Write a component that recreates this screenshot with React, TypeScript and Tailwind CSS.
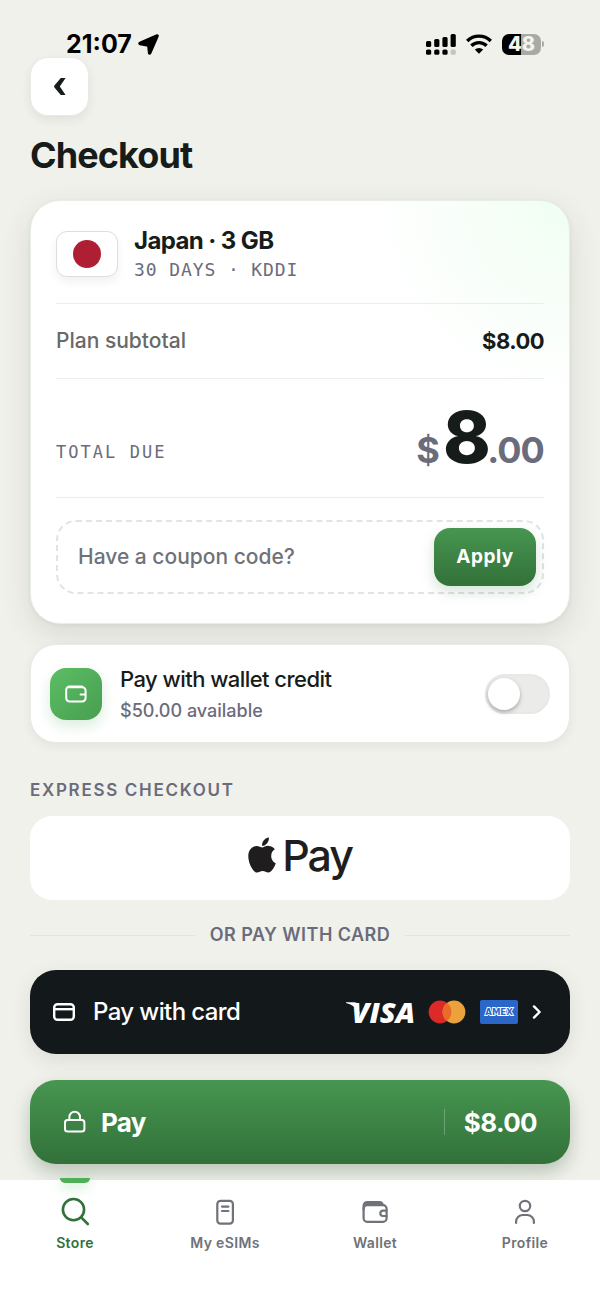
import { useState, type ReactNode } from "react";
import { FaApple } from "react-icons/fa";

const SANS = "font-['Inter',sans-serif]";
const MONO = "font-['DejaVu_Sans_Mono',monospace]";

const TABS: { label: string; href: string; icon: ReactNode; active?: boolean }[] = [
  { label: "Store", href: "#store", icon: <SearchIcon />, active: true },
  { label: "My eSIMs", href: "#esims", icon: <SimIcon /> },
  { label: "Wallet", href: "#wallet", icon: <WalletTabIcon /> },
  { label: "Profile", href: "#profile", icon: <ProfileIcon /> },
];

function SearchIcon() {
  return (
    <svg width="30" height="30" viewBox="0 0 30 30" fill="none" stroke="currentColor" strokeWidth="2.6" strokeLinecap="round">
      <circle cx="13.5" cy="12.6" r="10.6" />
      <path d="M21.200 20.400l6.600 6.600" />
    </svg>
  );
}

function SimIcon() {
  return (
    <svg width="30" height="30" viewBox="0 0 30 30" fill="none" stroke="currentColor" strokeWidth="2.200" strokeLinecap="round">
      <rect x="7.300" y="3.800" width="15.600" height="22.800" rx="3.200" />
      <path d="M12 9.600h6.400M12 14h6.400" />
    </svg>
  );
}

function WalletTabIcon() {
  return (
    <svg width="30" height="30" viewBox="0 0 30 30" fill="none" stroke="currentColor" strokeWidth="2.200" strokeLinecap="round" strokeLinejoin="round">
      <rect x="3.600" y="8.200" width="23" height="16.600" rx="3.600" />
      <path d="M3.600 12.400V8.600a3.600 3.600 0 0 1 3.600-3.600H19.600a3 3 0 0 1 3 3M5 6.700h16.600" />
      <path d="M26.400 13.600h-3.400a2.700 2.700 0 0 0 0 5.400h3.400" />
    </svg>
  );
}

function ProfileIcon() {
  return (
    <svg width="30" height="30" viewBox="0 0 30 30" fill="none" stroke="currentColor" strokeWidth="2.200" strokeLinecap="round">
      <circle cx="15" cy="9" r="5.200" />
      <path d="M6.100 26v-1.400a6.600 6.600 0 0 1 6.600-6.600h4.600a6.600 6.600 0 0 1 6.600 6.600v1.400" />
    </svg>
  );
}

function StatusBar() {
  return (
    <div className="flex h-[57px] items-end justify-between pr-[26px] pl-9 text-black">
      <div className="flex items-center gap-1.5">
        <span className="text-[25px] leading-[26px] font-bold">21:07</span>
        <svg width="21" height="21" viewBox="0 0 21 21" fill="currentColor" stroke="currentColor" strokeWidth="2" strokeLinejoin="round">
          <path d="M19 1.200 1.800 8.600c-.8.300-.7 1.400.1 1.600l8.200 1.500.8 7.400c.1.800 1 .9 1.400.2L19.800 2c.2-.5-.3-1-.8-.8z" />
        </svg>
      </div>
      <div className="flex h-[26px] items-center">
        <svg width="30" height="21" viewBox="0 0 30 21">
          <rect x="0" y="7" width="5.200" height="6" rx="1.600" />
          <rect x="8.200" y="5" width="5.200" height="8" rx="1.600" />
          <rect x="16.400" y="3" width="5.200" height="10" rx="1.600" />
          <rect x="24.600" y="0" width="5.200" height="13" rx="1.600" />
          <rect x="0" y="15.500" width="5.200" height="5.300" rx="1.600" />
          <rect x="8.200" y="15.500" width="5.200" height="5.300" rx="1.600" />
          <rect x="16.400" y="15.500" width="5.200" height="5.300" rx="1.600" />
          <rect x="24.600" y="15.500" width="5.200" height="5.300" rx="1.600" fill="#c4c5c0" />
        </svg>
        <svg className="ml-2.5" width="26" height="20" viewBox="0 0 26 20" fill="none" stroke="currentColor" strokeWidth="3.400">
          <path d="M1.200 7a16.800 16.800 0 0 1 23.600 0" />
          <path d="M5.400 11.800a10.800 10.800 0 0 1 15.200 0" />
          <path d="M8.800 15.600a6 6 0 0 1 8.400 0L13 19.800z" fill="currentColor" stroke="none" />
        </svg>
        <div className="ml-2.5 flex h-[21px] w-[39px] items-center justify-center rounded-[7px] bg-linear-to-r from-black from-48% to-[#a9aaa6] to-48% text-[20px] leading-none font-extrabold text-[#f3f4ef]">
          48
        </div>
        <div className="ml-px h-1.5 w-0.5 rounded-r-full bg-[#a9aaa6]" />
      </div>
    </div>
  );
}

function VisaMark() {
  return (
    <svg width="68" height="42" viewBox="0 -10 68 42" fill="#fff" role="img" aria-label="Visa">
      <path d="M0 1.200h8.400c1.600 0 2.600.8 3 2.300l2.600 10C11 7.500 6.600 3.300 0 1.900z" />
      <text x="5.500" y="22" fontFamily="Open Sans" fontSize="29" fontWeight="800" fontStyle="italic">
        VISA
      </text>
    </svg>
  );
}

function MastercardMark() {
  return (
    <svg width="38" height="24" viewBox="0 0 38 24" role="img" aria-label="Mastercard">
      <circle cx="12" cy="12" r="11.400" fill="#dc2a28" />
      <circle cx="26" cy="12" r="11.400" fill="#eca23c" />
      <path d="M19 3a11.400 11.400 0 0 1 0 18 11.400 11.400 0 0 1 0-18z" fill="#ea6a2b" />
    </svg>
  );
}

function AmexMark() {
  return (
    <svg width="38" height="24" viewBox="0 0 38 24" role="img" aria-label="American Express">
      <rect width="38" height="24" rx="2" fill="#2b67c9" />
      <text
        x="19"
        y="15.200"
        textAnchor="middle"
        fontFamily="DejaVu Sans"
        fontSize="8.500"
        fontWeight="700"
        fill="#2b67c9"
        stroke="#fff"
        strokeWidth="1.800"
        paintOrder="stroke"
      >
        AMEX
      </text>
    </svg>
  );
}

function OrderCard() {
  const [coupon, setCoupon] = useState("");

  return (
    <section className="rounded-[30px] border border-[#e6eee6] bg-white bg-[radial-gradient(circle_at_100%_0%,#f0fef2_0,#ffffff_200px)] px-[25px] pt-[27px] pb-[29px] shadow-[0_10px_30px_rgba(40,50,35,0.12),0_1px_4px_rgba(40,50,35,0.06)]">
      <div className="flex items-center border-b border-[#ecedea] pb-6">
        <div className="flex h-[46px] w-[62px] items-center justify-center rounded-[11px] border border-[#dedede] bg-white shadow-[0_5px_10px_rgba(0,0,0,0.06)]">
          <div className="size-7 rounded-full bg-[#ae1f33]" />
        </div>
        <div className="ml-4">
          <h2 className="text-[24px] leading-[26px] font-bold tracking-tight">Japan · 3 GB</h2>
          <p className={`${MONO} mt-[7px] text-[18px] leading-[18px] tracking-wider text-[#6b6c7b]`}>30 DAYS · KDDI</p>
        </div>
      </div>

      <div className="flex h-[75px] items-center justify-between border-b border-[#ecedea]">
        <span className="text-[21px] font-medium text-[#666a68]">Plan subtotal</span>
        <span className="text-[22px] font-bold tracking-tight">$8.00</span>
      </div>

      <div className="flex h-[119px] items-end justify-between border-b border-[#ecedea] pb-6">
        <span className={`${MONO} mb-2.5 text-[17px] leading-[22px] tracking-[0.12em] text-[#6b6c7b]`}>TOTAL DUE</span>
        <span className="text-[36px] leading-none font-bold tracking-tight text-[#6b6c7b]">
          $<span className="ml-1 text-[72px] leading-[72px] font-extrabold tracking-tighter text-[#161c19]">8</span>.00
        </span>
      </div>

      <div className="mt-[22px] flex items-center gap-3 rounded-[20px] border-2 border-dashed border-[#e3e3e1] p-1.5 pl-5">
        <input
          type="text"
          aria-label="Coupon code"
          value={coupon}
          onChange={(e) => setCoupon(e.target.value)}
          placeholder="Have a coupon code?"
          className="min-w-0 flex-1 bg-transparent text-[21px] font-medium text-[#161c19] outline-none placeholder:text-[#6f7278]"
        />
        <button
          type="button"
          className="h-[58px] w-[102px] rounded-2xl bg-linear-to-b from-[#479650] to-[#32713a] text-[19px] font-bold tracking-wide text-white shadow-[0_6px_14px_rgba(50,113,58,0.2)]"
        >
          Apply
        </button>
      </div>
    </section>
  );
}

function WalletCredit() {
  const [on, setOn] = useState(false);

  return (
    <label className="mt-5 flex h-[99px] items-center rounded-[26px] border border-[#e9eae6] bg-white px-[19px] shadow-[0_3px_10px_rgba(40,50,35,0.07)]">
      <span className="flex size-[52px] items-center justify-center rounded-2xl bg-linear-to-br from-[#5cbd65] to-[#479f50] shadow-[0_6px_14px_rgba(71,159,80,0.2)]">
        <svg width="22" height="18" viewBox="0 0 22 18" fill="none" stroke="#fff" strokeWidth="2" strokeLinecap="round" strokeLinejoin="round">
          <path d="M18.200 2.400a3 3 0 0 0-2-.9H4.600a3.400 3.400 0 0 0-3.400 3.400v8.200a3.400 3.400 0 0 0 3.400 3.400h12.600a3.400 3.400 0 0 0 3.400-3.400V5.700a3.400 3.400 0 0 0-3.400-3.400H3.800" />
          <path d="M20 9.400h-4.500" />
        </svg>
      </span>
      <span className="ml-[18px] flex-1">
        <span className="block text-[22px] leading-[26px] font-medium tracking-tight">Pay with wallet credit</span>
        <span className="mt-2 block text-[18px] leading-[22px] font-medium text-[#6b6c7b]">$50.00 available</span>
      </span>
      <input
        type="checkbox"
        role="switch"
        checked={on}
        onChange={(e) => setOn(e.target.checked)}
        className="flex h-10 w-[65px] appearance-none items-center rounded-full border-2 border-[#e8e8e6] bg-[#ebebe9] p-px before:block before:size-8 before:rounded-full before:bg-white before:shadow-[0_2px_4px_rgba(0,0,0,0.3)] checked:bg-[#479650] checked:before:ml-auto"
      />
    </label>
  );
}

function TabBar() {
  return (
    <nav className="relative mt-auto grid h-[124px] grid-cols-4 bg-white">
      {TABS.map((t) => (
        <a
          key={t.label}
          href={t.href}
          aria-current={t.active ? "page" : undefined}
          className={`relative flex flex-col items-center pt-[17px] text-[14px] leading-5 font-semibold tracking-wide ${
            t.active ? "text-[#32713a]" : "text-[#6f7278]"
          }`}
        >
          {t.active && (
            <span className="absolute -top-0.5 h-[5px] w-[30px] rounded-b-md bg-[#4fae58] shadow-[0_4px_12px_rgba(79,190,90,0.4)]" />
          )}
          {t.icon}
          <span className="mt-1.5">{t.label}</span>
        </a>
      ))}
    </nav>
  );
}

export default function App() {
  return (
    <div className={`${SANS} flex min-h-screen flex-col bg-[#f0f1eb] text-[#161c19]`}>
      <main className="flex flex-col px-[30px] pb-4">
        <StatusBar />
        <button
          type="button"
          aria-label="Back"
          className="flex size-[59px] items-center justify-center rounded-[18px] border border-[#e9eae6] bg-white shadow-[0_4px_10px_rgba(40,50,35,0.08)]"
        >
          <svg width="12" height="17" viewBox="0 0 12 17" fill="currentColor">
            <path d="M6.800 0H11.600L5.800 8.500 11.600 17H6.800L.2 9.200V7.800z" />
          </svg>
        </button>
        <h1 className="mt-[17px] mb-[23px] text-[36px] leading-[44px] font-bold tracking-tight">Checkout</h1>

        <OrderCard />
        <WalletCredit />

        <h2 className="mt-9 text-[17px] leading-[22px] font-semibold tracking-widest text-[#6b6c7b]">EXPRESS CHECKOUT</h2>
        <button
          type="button"
          className="mt-[15px] flex h-[84px] items-center justify-center gap-1.5 rounded-[22px] bg-white pb-1.5 text-[43px] leading-none font-medium tracking-tighter text-[#1f1d1e]"
        >
          <FaApple className="h-10 w-7" preserveAspectRatio="none" />
          Pay
        </button>

        <div className="my-6 flex items-center gap-3.5 text-[18px] leading-[22px] font-semibold tracking-wide text-[#6b6c7b]">
          <span className="h-px flex-1 bg-[#e4e5e0]" />
          OR PAY WITH CARD
          <span className="h-px flex-1 bg-[#e4e5e0]" />
        </div>

        <button
          type="button"
          className="flex h-[84px] items-center rounded-[26px] bg-[#13181b] pr-7 pl-[23px] text-white shadow-[0_6px_20px_rgba(40,50,35,0.1)]"
        >
          <svg width="22" height="18" viewBox="0 0 22 18" fill="none" stroke="currentColor" strokeWidth="2.400">
            <rect x="1.200" y="1.200" width="19.600" height="15.600" rx="3.400" />
            <path d="M1 6.200h20" />
          </svg>
          <span className="ml-[18px] text-[24px] font-medium tracking-tight">Pay with card</span>
          <span className="ml-auto flex items-center gap-3.5">
            <VisaMark />
            <MastercardMark />
            <AmexMark />
            <svg width="10" height="16" viewBox="0 0 10 16" fill="none" stroke="currentColor" strokeWidth="2.400" strokeLinecap="round" strokeLinejoin="round">
              <path d="M2 2.400 7.600 8 2 13.600" />
            </svg>
          </span>
        </button>

        <button
          type="button"
          className="mt-[26px] flex h-[84px] items-center rounded-[26px] bg-linear-to-b from-[#479650] to-[#32713a] px-[33px] text-[26px] font-bold tracking-tight text-white shadow-[0_8px_18px_rgba(40,80,45,0.28)]"
        >
          <svg width="24" height="24" viewBox="0 0 24 24" fill="none" stroke="currentColor" strokeWidth="2">
            <rect x="2" y="10" width="19.400" height="11.600" rx="2.600" />
            <path d="M6.400 10V7a5.300 5.300 0 0 1 10.600 0v3" />
          </svg>
          <span className="ml-3.5">Pay</span>
          <span className="ml-auto h-[26px] w-px bg-white/25" />
          <span className="ml-[19px]">$8.00</span>
        </button>
      </main>
      <TabBar />
    </div>
  );
}
